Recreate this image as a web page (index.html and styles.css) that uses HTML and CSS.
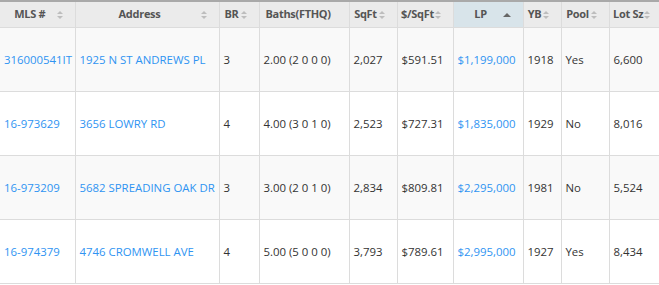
FILE: index.html
```html
<!DOCTYPE html>
<html lang="en">
<head>
    <meta charset="UTF-8">
    <meta name="viewport" content="width=device-width, initial-scale=1.0">
    <title>Listings</title>
    <link rel="stylesheet" href="styles.css">
</head>
<body>
    <table class="listings">
        <colgroup>
            <col class="c-mls">
            <col class="c-addr">
            <col class="c-br">
            <col class="c-baths">
            <col class="c-sqft">
            <col class="c-ppsf">
            <col class="c-lp">
            <col class="c-yb">
            <col class="c-pool">
            <col class="c-lot">
        </colgroup>
        <thead>
            <tr>
                <th class="sortable">MLS #</th>
                <th class="sortable">Address</th>
                <th class="sortable">BR</th>
                <th>Baths(FTHQ)</th>
                <th class="sortable">SqFt</th>
                <th class="sortable">$/SqFt</th>
                <th class="sorted">LP</th>
                <th class="sortable">YB</th>
                <th class="sortable">Pool</th>
                <th class="sortable">Lot Sz</th>
            </tr>
        </thead>
        <tbody>
            <tr>
                <td><a href="#">316000541IT</a></td>
                <td><a href="#">1925 N ST ANDREWS PL</a></td>
                <td>3</td>
                <td>2.00 (2 0 0 0)</td>
                <td>2,027</td>
                <td>$591.51</td>
                <td><a href="#">$1,199,000</a></td>
                <td>1918</td>
                <td>Yes</td>
                <td>6,600</td>
            </tr>
            <tr>
                <td><a href="#">16-973629</a></td>
                <td><a href="#">3656 LOWRY RD</a></td>
                <td>4</td>
                <td>4.00 (3 0 1 0)</td>
                <td>2,523</td>
                <td>$727.31</td>
                <td><a href="#">$1,835,000</a></td>
                <td>1929</td>
                <td>No</td>
                <td>8,016</td>
            </tr>
            <tr>
                <td><a href="#">16-973209</a></td>
                <td><a href="#">5682 SPREADING OAK DR</a></td>
                <td>3</td>
                <td>3.00 (2 0 1 0)</td>
                <td>2,834</td>
                <td>$809.81</td>
                <td><a href="#">$2,295,000</a></td>
                <td>1981</td>
                <td>No</td>
                <td>5,524</td>
            </tr>
            <tr>
                <td><a href="#">16-974379</a></td>
                <td><a href="#">4746 CROMWELL AVE</a></td>
                <td>4</td>
                <td>5.00 (5 0 0 0)</td>
                <td>3,793</td>
                <td>$789.61</td>
                <td><a href="#">$2,995,000</a></td>
                <td>1927</td>
                <td>Yes</td>
                <td>8,434</td>
            </tr>
        </tbody>
    </table>
</body>
</html>
```

FILE: styles.css
```css
* {
    margin: 0;
    padding: 0;
    box-sizing: border-box;
}

body {
    background: #fff;
    font-family: 'Open Sans', 'Noto Sans', Arial, sans-serif;
    font-size: 11.4px;
    color: #333;
    overflow: hidden;
}

.listings {
    border-collapse: collapse;
    table-layout: fixed;
    width: 662px;
    border-top: 2px solid #a9a9a9;
}

.c-mls { width: 75px; }
.c-addr { width: 144px; }
.c-br { width: 40px; }
.c-baths { width: 90px; }
.c-sqft { width: 48px; }
.c-ppsf { width: 56px; }
.c-lp { width: 70px; }
.c-yb { width: 38px; }
.c-pool { width: 48px; }
.c-lot { width: 53px; }

th {
    position: relative;
    height: 26px;
    background: #ebebeb;
    color: #555;
    font-weight: 700;
    font-size: 11px;
    letter-spacing: -0.3px;
    text-align: center;
    padding: 0 15px 1px 0;
    border-left: 1px solid #dcdcdc;
    border-bottom: 1px solid #dcdcdc;
    white-space: nowrap;
}

th:first-child {
    border-left: none;
}

th:nth-child(4) {
    padding-right: 0;
    text-align: left;
    padding-left: 6px;
}

th.sortable::before,
th.sortable::after {
    content: '';
    position: absolute;
    right: 12px;
    border-left: 3.5px solid transparent;
    border-right: 3.5px solid transparent;
}

th.sortable::before {
    top: 9px;
    border-bottom: 3.5px solid #bdbdbd;
}

th.sortable::after {
    top: 14px;
    border-top: 3.5px solid #bdbdbd;
}

th.sorted {
    background: #d8e4ea;
}

th.sorted::after {
    content: '';
    position: absolute;
    right: 12px;
    top: 11px;
    border-left: 4px solid transparent;
    border-right: 4px solid transparent;
    border-bottom: 4px solid #666;
}

td {
    height: 64px;
    padding: 0 3px 0 4px;
    border-left: 1px solid #dcdcdc;
    border-bottom: 1px solid #dcdcdc;
    white-space: nowrap;
    overflow: hidden;
    vertical-align: middle;
}

td:first-child {
    border-left: none;
}

tbody tr:nth-child(odd) td {
    background: #f9f9f9;
}

a {
    color: #2f94f2;
    text-decoration: none;
}
```
